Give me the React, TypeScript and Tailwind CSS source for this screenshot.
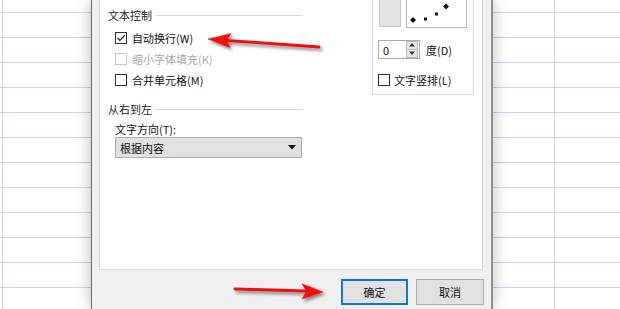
import type { ReactNode } from 'react';

const ROWS = 12;

function SheetStrip({ firstCol, className }: { firstCol: string; className: string }) {
  return (
    <div className={`flex flex-col ${className}`}>
      <div className="flex h-[13px] shrink-0 border-b border-[#cfd0ea]">
        <div className={`${firstCol} shrink-0 border-r border-[#cfd0ea]`} />
        <div className="flex-1" />
      </div>
      {Array.from({ length: ROWS }).map((_, i) => (
        <div key={i} className="flex h-[25px] shrink-0 border-b border-[#cfd0ea]">
          <div className={`${firstCol} shrink-0 border-r border-[#cfd0ea]`} />
          <div className="flex-1" />
        </div>
      ))}
    </div>
  );
}

function CheckBox({ checked, disabled }: { checked?: boolean; disabled?: boolean }) {
  return (
    <span
      className={`flex h-[12px] w-[12px] shrink-0 items-center justify-center border bg-white ${
        disabled ? 'border-[#c6c6c6]' : 'border-[#333333]'
      }`}
    >
      {checked ? (
        <svg width="10" height="10" viewBox="0 0 10 10">
          <polyline points="1.5,5 4,7.5 8.8,2.2" fill="none" stroke="#222" strokeWidth="1.2" />
        </svg>
      ) : null}
    </span>
  );
}

function CheckRow({ label, checked, disabled }: { label: string; checked?: boolean; disabled?: boolean }) {
  return (
    <div className="flex h-[21px] items-center gap-[5px] pl-[7px]">
      <CheckBox checked={checked} disabled={disabled} />
      <span className={disabled ? 'text-[#a8a8a8]' : 'text-[#111]'}>{label}</span>
    </div>
  );
}

function GroupHeading({ children, className }: { children: ReactNode; className: string }) {
  return (
    <div className={`flex h-[14px] items-center ${className}`}>
      <span className="text-[#222]">{children}</span>
      <span className="ml-[4px] flex-1 border-t border-[#d5d5d5]" />
    </div>
  );
}

// red call-out arrows drawn over the screenshot
function Arrows() {
  return (
    <svg className="pointer-events-none absolute inset-0 z-20" width="620" height="309" viewBox="0 0 620 309">
      <defs>
        <filter id="shadow" x="-10%" y="-50%" width="120%" height="200%">
          <feDropShadow dx="2" dy="2.5" stdDeviation="1.6" floodColor="#000" floodOpacity="0.45" />
        </filter>
      </defs>
      <g filter="url(#shadow)" fill="#f40d0d" stroke="#f40d0d">
        <line x1="319" y1="47" x2="226" y2="40.4" strokeWidth="3" strokeLinecap="round" />
        <polygon points="208,39 231,33.5 226.5,40.5 230,47.5" strokeWidth="0.5" />
        <line x1="235" y1="289" x2="306" y2="291" strokeWidth="3" strokeLinecap="round" />
        <polygon points="323,292 302,283.8 306.5,291.2 302,299" strokeWidth="0.5" />
      </g>
    </svg>
  );
}

export default function App() {
  return (
    <div className="relative flex h-[309px] w-[620px] overflow-hidden bg-white font-['Noto_Sans_CJK_SC','Noto_Sans',sans-serif] text-[11px] leading-[14px]">
      <SheetStrip firstCol="w-[3px]" className="w-[91px] shrink-0" />

      <div className="relative z-10 flex w-[402px] shrink-0 flex-col border-l border-r-2 border-l-[#6a6a6a] border-r-[#8e8e8e] bg-[#f0f0f0] shadow-[0_0_14px_rgba(0,0,0,0.28)]">
        <div className="pl-[7px] pr-[8px]">
          <div className="flex h-[270px] border-x border-b border-[#d9d9d9] bg-white pl-[8px]">
            <div className="flex w-[194px] flex-col">
              <GroupHeading className="mt-[8px]">文本控制</GroupHeading>
              <div className="mt-[5px] flex flex-col">
                <CheckRow label="自动换行(W)" checked />
                <CheckRow label="缩小字体填充(K)" disabled />
                <CheckRow label="合并单元格(M)" />
              </div>
              <GroupHeading className="mt-[12px]">从右到左</GroupHeading>
              <div className="mt-[6px] h-[14px] pl-[7px] text-[#111]">文字方向(T):</div>
              <div className="ml-[7px] mt-[1px] flex h-[21px] items-center justify-between border border-[#adadad] bg-[#e1e1e1] pl-[4px] pr-[5px] text-[#111]">
                <span>根据内容</span>
                <svg width="8" height="5" viewBox="0 0 8 5">
                  <polygon points="0,0 8,0 4,4.5" fill="#111" />
                </svg>
              </div>
            </div>

            <div className="ml-[70px] flex h-[95px] w-[102px] flex-col border-x border-b border-[#dcdcdc]">
              <div className="flex items-start pl-[6px]">
                <div className="h-[27px] w-[22px] border-x border-b border-[#c7c7c7] bg-[#e2e2e2]" />
                <div className="ml-[5px] h-[28px] w-[61px] border-x border-b border-[#b5b5b5] bg-white">
                  <svg width="59" height="27" viewBox="0 0 59 27">
                    <polygon points="6,17 9,20 6,23 3,20" fill="#111" />
                    <rect x="17" y="17.5" width="3" height="3" fill="#111" />
                    <rect x="28" y="12.5" width="3" height="3" fill="#111" />
                    <polygon points="39,3.5 42,6.5 39,9.5 36,6.5" fill="#111" />
                  </svg>
                </div>
              </div>

              <div className="mt-[12px] flex items-center pl-[5px]">
                <div className="flex h-[19px] w-[42px] items-center justify-between border border-[#a9a9a9] bg-white pl-[4px] pr-[1px]">
                  <span className="text-[#111]">0</span>
                  <div className="flex h-[17px] w-[12px] flex-col">
                    <div className="flex h-[8.5px] items-center justify-center border border-[#b9b9b9] bg-[#e6e6e6]">
                      <svg width="6" height="4" viewBox="0 0 6 4">
                        <polygon points="0,3.5 6,3.5 3,0" fill="#333" />
                      </svg>
                    </div>
                    <div className="flex h-[8.5px] items-center justify-center border border-t-0 border-[#b9b9b9] bg-[#e6e6e6]">
                      <svg width="6" height="4" viewBox="0 0 6 4">
                        <polygon points="0,0.5 6,0.5 3,4" fill="#333" />
                      </svg>
                    </div>
                  </div>
                </div>
                <span className="ml-[6px] text-[#111]">度(D)</span>
              </div>

              <div className="mt-[10px] flex h-[21px] items-center gap-[4px] pl-[5px]">
                <CheckBox />
                <span className="text-[#111]">文字竖排(L)</span>
              </div>
            </div>
          </div>
        </div>

        <div className="flex justify-end gap-[8px] pr-[7px] pt-[9px]">
          <button
            type="button"
            className="flex h-[26px] w-[67px] items-center justify-center border-2 border-[#0a78d6] bg-[#e1e1e1] text-[#111]"
          >
            确定
          </button>
          <button
            type="button"
            className="flex h-[26px] w-[68px] items-center justify-center border border-[#adadad] bg-[#e1e1e1] text-[#111]"
          >
            取消
          </button>
        </div>
      </div>

      <SheetStrip firstCol="w-[62px]" className="flex-1" />

      <Arrows />
    </div>
  );
}
